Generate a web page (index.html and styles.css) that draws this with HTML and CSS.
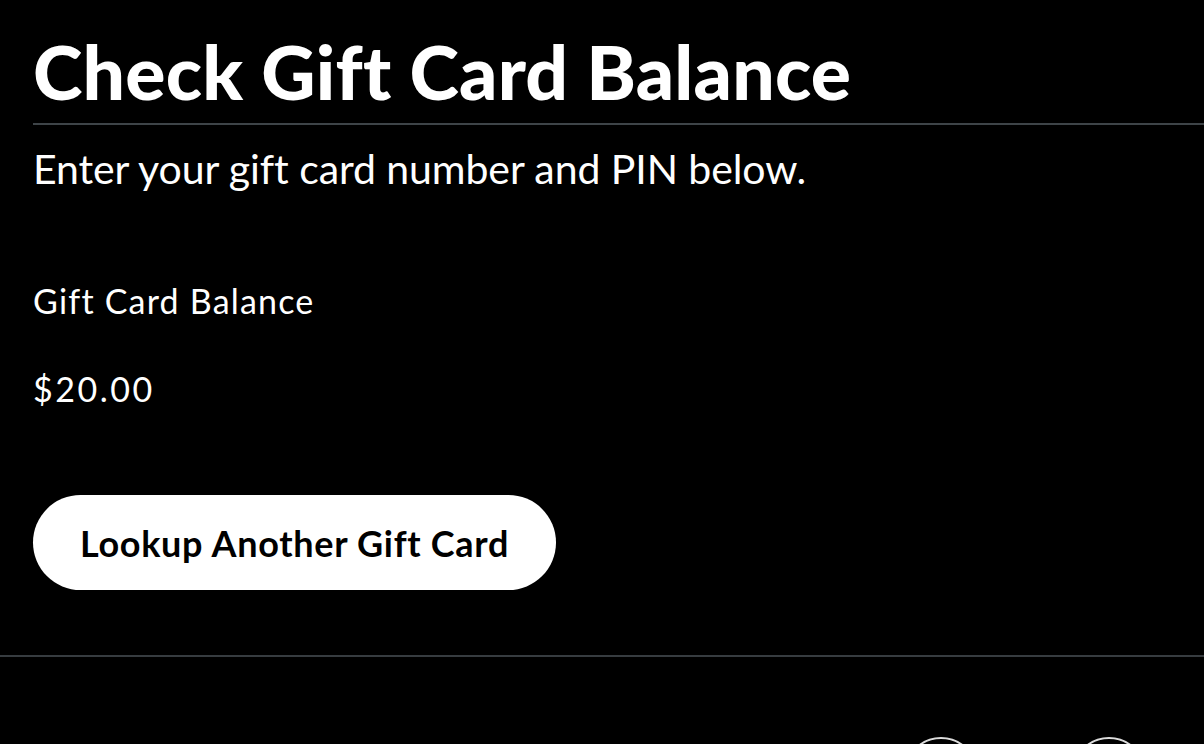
FILE: index.html
```html
<!DOCTYPE html>
<html lang="en">
<head>
<meta charset="utf-8">
<title>Check Gift Card Balance</title>
<link rel="stylesheet" href="styles.css">
</head>
<body>
<main class="page">
  <h1 class="title">Check Gift Card Balance</h1>
  <p class="intro">Enter your gift card number and PIN below.</p>
  <p class="label">Gift Card Balance</p>
  <p class="amount">$20.00</p>
  <button class="btn" type="button">Lookup Another Gift Card</button>
</main>
<footer class="footer">
  <div class="social">
    <span class="circle"></span>
    <span class="circle"></span>
  </div>
</footer>
</body>
</html>
```
FILE: styles.css
```css
html, body {
  margin: 0;
  padding: 0;
  background: #000;
  color: #fff;
  font-family: Lato, "Noto Sans", Arial, sans-serif;
  overflow: hidden;
  height: 100%;
}
.page {
  padding: 0 0 0 33px;
  display: flex;
  flex-direction: column;
  align-items: flex-start;
}
.title {
  align-self: stretch;
  margin: 0;
  padding-top: 31px;
  padding-bottom: 12px;
  font-weight: 900;
  font-size: 75px;
  line-height: 80px;
  letter-spacing: 0.2px;
  border-bottom: 2px solid #3e4448;
}
.intro {
  margin: 20px 0 0;
  font-size: 41px;
  line-height: 48px;
  letter-spacing: -0.08px;
}
.label {
  margin: 88px 0 0;
  font-size: 34px;
  line-height: 40px;
  letter-spacing: 1.2px;
}
.amount {
  margin: 48px 0 0;
  font-size: 34px;
  line-height: 40px;
  letter-spacing: 2.5px;
}
.btn {
  margin-top: 86px;
  height: 95px;
  width: 523px;
  padding: 0;
  border: 0;
  border-radius: 48px;
  background: #fff;
  color: #000;
  font-family: inherit;
  font-weight: 700;
  font-size: 36px;
  letter-spacing: 0.7px;
  cursor: pointer;
}
.footer {
  margin-top: 65px;
  border-top: 2px solid #373c40;
  display: flex;
  justify-content: flex-end;
  padding: 80px 58px 0 0;
}
.social {
  display: flex;
  gap: 94px;
}
.circle {
  width: 70px;
  height: 70px;
  border: 2px solid #dcdcdc;
  border-radius: 50%;
}
```
